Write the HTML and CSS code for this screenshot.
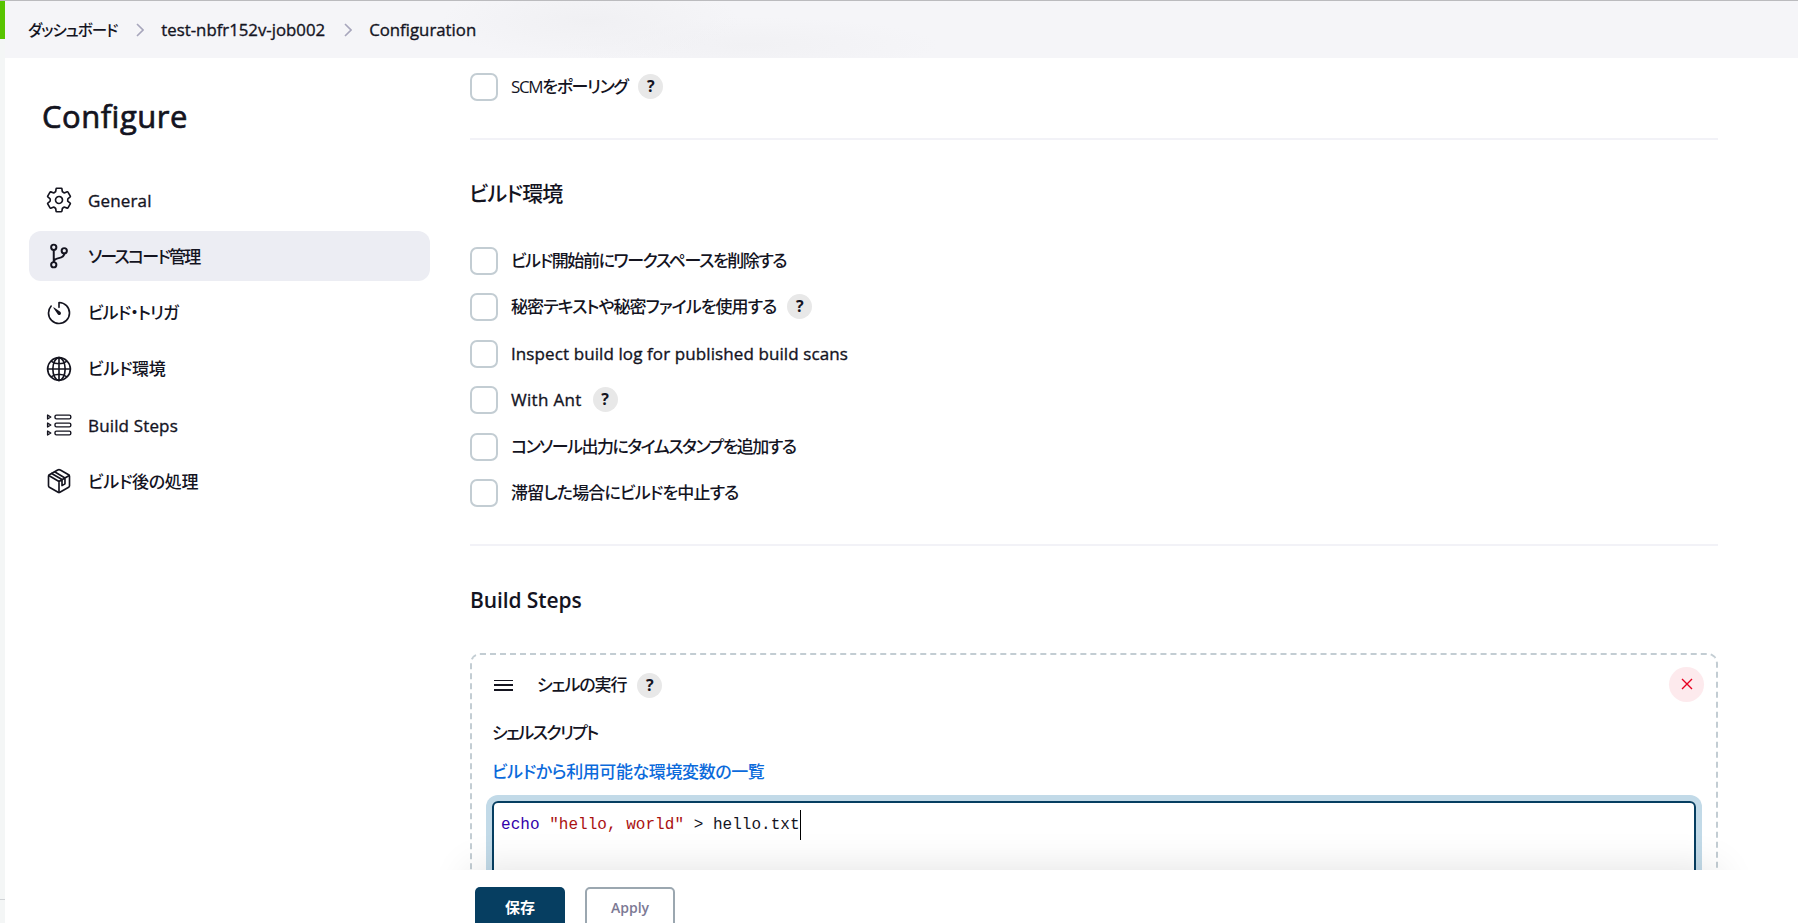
FILE: index.html
```html
<!DOCTYPE html>
<html lang="ja">
<head>
    <meta charset="UTF-8">
    <meta name="viewport" content="width=device-width, initial-scale=1.0">
    <title>test-nbfr152v-job002 Config [Jenkins]</title>
    <link rel="stylesheet" href="styles.css">
</head>
<body>
    <div class="edge">
        <div class="edge-mark"></div>
        <div class="edge-line"></div>
    </div>
    <div class="page">
        <nav class="breadcrumbs">
            <a class="crumb-home">ダッシュボード</a>
            <svg class="chevron" viewBox="0 0 8 14"><path d="M1 1l6 6-6 6"/></svg>
            <a class="crumb latin">test-nbfr152v-job002</a>
            <svg class="chevron" viewBox="0 0 8 14"><path d="M1 1l6 6-6 6"/></svg>
            <a class="crumb latin">Configuration</a>
        </nav>
        <div class="columns">
            <aside class="side-panel">
                <h1>Configure</h1>
                <div class="tasks">
                    <a class="task">
                        <svg viewBox="0 0 512 512"><path d="M262.29 192.31a64 64 0 1057.4 57.4 64.13 64.13 0 00-57.4-57.4zM416.39 256a154.34 154.34 0 01-1.53 20.79l45.21 35.46a10.81 10.81 0 012.45 13.75l-42.77 74a10.81 10.81 0 01-13.14 4.59l-44.9-18.08a16.11 16.11 0 00-15.17 1.75A164.48 164.48 0 01325 400.8a15.94 15.94 0 00-8.82 12.14l-6.73 47.89a11.08 11.08 0 01-10.68 9.17h-85.54a11.11 11.11 0 01-10.69-8.87l-6.72-47.82a16.07 16.07 0 00-9-12.22 155.3 155.3 0 01-21.46-12.57 16 16 0 00-15.11-1.71l-44.89 18.07a10.81 10.81 0 01-13.14-4.58l-42.77-74a10.8 10.8 0 012.45-13.75l38.21-30a16.05 16.05 0 006-14.08c-.36-4.17-.58-8.33-.58-12.5s.21-8.27.58-12.35a16 16 0 00-6.07-13.94l-38.19-30A10.81 10.81 0 0149.48 186l42.77-74a10.81 10.81 0 0113.14-4.59l44.9 18.08a16.11 16.11 0 0015.17-1.75A164.48 164.48 0 01187 111.2a15.94 15.94 0 008.82-12.14l6.73-47.89A11.08 11.08 0 01213.23 42h85.54a11.11 11.11 0 0110.69 8.87l6.72 47.82a16.07 16.07 0 009 12.22 155.3 155.3 0 0121.46 12.57 16 16 0 0015.11 1.71l44.89-18.07a10.81 10.81 0 0113.14 4.58l42.77 74a10.8 10.8 0 01-2.45 13.75l-38.21 30a16.05 16.05 0 00-6.05 14.08c.33 4.14.55 8.3.55 12.47z"/></svg>
                        <span class="latin">General</span>
                    </a>
                    <a class="task active">
                        <svg class="heavy" viewBox="0 0 512 512"><circle cx="160" cy="96" r="48"/><circle cx="160" cy="416" r="48"/><circle cx="352" cy="160" r="48"/><path d="M160 368V144M352 208c0 128-192 48-192 160"/></svg>
                        <span class="t-source">ソースコード管理</span>
                    </a>
                    <a class="task">
                        <svg viewBox="0 0 512 512"><path d="M112.91 128A191.85 191.85 0 0064 254c-1.18 106.35 85.65 193.8 192 194 106.2.2 192-85.83 192-192 0-104.54-83.55-189.61-187.5-192a4.36 4.36 0 00-4.5 4.37V152"/><path class="solid" d="M233.38 278.63l-79-113a8.13 8.13 0 0111.32-11.32l113 79a32.5 32.5 0 01-37.25 53.26 33.21 33.21 0 01-8.07-7.94z"/></svg>
                        <span class="t-trigger">ビルド・トリガ</span>
                    </a>
                    <a class="task">
                        <svg viewBox="0 0 512 512"><path d="M256 48C141.13 48 48 141.13 48 256s93.13 208 208 208 208-93.13 208-208S370.87 48 256 48z"/><path d="M256 48c-58.07 0-112.67 93.13-112.67 208S197.93 464 256 464s112.67-93.13 112.67-208S314.07 48 256 48z"/><path d="M117.33 117.33c38.24 27.15 86.38 43.34 138.67 43.34s100.43-16.19 138.67-43.34M394.67 394.67c-38.24-27.15-86.38-43.34-138.67-43.34s-100.43 16.19-138.67 43.34M256 48v416M464 256H48"/></svg>
                        <span class="t-env">ビルド環境</span>
                    </a>
                    <a class="task">
                        <svg viewBox="0 0 28 28" class="steps"><rect x="10" y="4.1" width="15.8" height="3.8" rx="1.4"/><rect x="10" y="12.1" width="15.8" height="3.8" rx="1.4"/><rect x="10" y="20.1" width="15.8" height="3.8" rx="1.4"/><path d="M2.6 4v4L5.8 6zM2.6 12v4l3.2-2zM2.6 20v4l3.2-2z"/></svg>
                        <span class="latin">Build Steps</span>
                    </a>
                    <a class="task">
                        <svg viewBox="0 0 512 512"><path d="M448 341.37V170.61A32 32 0 00432.11 143l-152-88.46a47.94 47.94 0 00-48.24 0L79.89 143A32 32 0 0064 170.61v170.76A32 32 0 0079.89 369l152 88.46a48 48 0 0048.24 0l152-88.46A32 32 0 00448 341.37z"/><path d="M69 153.99l187 110 187-110M256 463.99v-200M121 118l190 112M175 88l190 112v108l-54 32V230"/></svg>
                        <span class="t-post">ビルド後の処理</span>
                    </a>
                </div>
            </aside>
            <main class="main-panel">
                <div class="check">
                    <span class="box"></span>
                    <span class="t-scm">SCMをポーリング</span>
                    <span class="help">?</span>
                </div>
                <section>
                    <h2 class="h-env">ビルド環境</h2>
                    <div class="check-list">
                        <div class="check"><span class="box"></span><span class="t-clean">ビルド開始前にワークスペースを削除する</span></div>
                        <div class="check"><span class="box"></span><span class="t-secret">秘密テキストや秘密ファイルを使用する</span><span class="help">?</span></div>
                        <div class="check"><span class="box"></span><span class="latin">Inspect build log for published build scans</span></div>
                        <div class="check"><span class="box"></span><span class="t-ant latin">With Ant</span><span class="help">?</span></div>
                        <div class="check"><span class="box"></span><span class="t-time">コンソール出力にタイムスタンプを追加する</span></div>
                        <div class="check"><span class="box"></span><span class="t-abort">滞留した場合にビルドを中止する</span></div>
                    </div>
                </section>
                <section>
                    <h2>Build Steps</h2>
                    <div class="chunk">
                        <div class="chunk-header">
                            <span class="handle"><i></i><i></i><i></i></span>
                            <span class="chunk-title">シェルの実行</span>
                            <span class="help">?</span>
                            <button class="delete">
                                <svg viewBox="0 0 12 12"><path d="M1 1l10 10M11 1L1 11"/></svg>
                            </button>
                        </div>
                        <div class="field-label">シェルスクリプト</div>
                        <a class="env-link">ビルドから利用可能な環境変数の一覧</a>
                        <div class="editor"><span class="builtin">echo</span> <span class="string">"hello, world"</span> &gt; hello.txt<span class="cursor"></span></div>
                    </div>
                </section>
            </main>
        </div>
        <div class="bottom-shadow"></div>
        <div class="bottom-bar">
            <button class="save">保存</button>
            <button class="apply">Apply</button>
        </div>
    </div>
</body>
</html>
```
FILE: styles.css
```css
* {
    box-sizing: border-box;
}
body {
    margin: 0;
    height: 100vh;
    display: flex;
    overflow: hidden;
    background: #fff;
    color: #14141f;
    font-family: "Open Sans", "Noto Sans CJK JP", sans-serif;
    font-size: 17px;
    font-weight: 500;
    font-feature-settings: "palt";
    line-height: 24px;
    border-top: 1px solid #bbbbbe;
}
.latin {
    letter-spacing: 0.1px;
    -webkit-text-stroke: 0.35px currentColor;
}
.edge {
    width: 5px;
    flex: none;
    background: #f4f6f6;
}
.edge-mark {
    height: 38px;
    background: #58c400;
}
.edge-line {
    height: 1px;
    margin-top: 860px;
    background: #d0d3d6;
}
.page {
    flex: 1;
    position: relative;
    overflow: hidden;
}
.breadcrumbs {
    height: 57px;
    display: flex;
    align-items: center;
    padding: 0 23px;
    background: radial-gradient(ellipse 150px 40px at 585px 20px, #f0f0f3, transparent),
        radial-gradient(ellipse 190px 28px at 745px 44px, #f1f1f4, transparent), #f5f5f8;
}
.crumb-home {
    font-size: 15.5px;
    letter-spacing: -1px;
}
.crumb {
    letter-spacing: -0.1px;
}
.breadcrumbs .crumb {
    letter-spacing: 0;
    font-size: 16.8px;
}
.chevron {
    width: 8px;
    height: 14px;
    margin: 0 17.5px 0 18.5px;
    fill: none;
    stroke: #a7a6bc;
    stroke-width: 1.6;
}
.columns {
    display: flex;
}
.side-panel {
    width: 425px;
    flex: none;
    padding: 36px 0 0 24px;
}
h1 {
    margin: 0 0 0 13px;
    font-size: 31px;
    font-weight: 500;
    line-height: 44px;
    letter-spacing: 0.5px;
    -webkit-text-stroke: 0.7px currentColor;
}
.tasks {
    display: flex;
    flex-direction: column;
    gap: 6.3px;
    margin-top: 37px;
}
.task {
    height: 50px;
    display: flex;
    align-items: center;
    gap: 15px;
    padding: 0 16px;
    border-radius: 12px;
}
.task.active {
    background: #ecedf3;
}
.task span {
    padding-top: 1px;
}
.task .latin {
    letter-spacing: 0.15px;
}
.task svg {
    width: 28px;
    height: 28px;
    fill: none;
    stroke: currentColor;
    stroke-width: 30;
    stroke-linecap: round;
    stroke-linejoin: round;
}
.task .heavy {
    stroke-width: 36;
}
.task .solid {
    fill: currentColor;
    stroke: none;
}
.task .steps {
    stroke-width: 1.4;
}
.t-source {
    letter-spacing: -1.75px;
}
.t-trigger {
    letter-spacing: -0.9px;
}
.t-env,
.t-post {
    letter-spacing: -0.3px;
}
.main-panel {
    width: 1248px;
    margin-left: 40px;
    padding-top: 15px;
}
.check {
    height: 28px;
    display: flex;
    align-items: center;
}
.box {
    width: 28px;
    height: 28px;
    margin-right: 13px;
    border: 2px solid #c3cdd3;
    border-radius: 7px;
}
.help {
    width: 25px;
    height: 25px;
    margin: -1px 0 0 11px;
    border-radius: 50%;
    background: #e8e8e8;
    font-size: 16px;
    font-weight: 700;
    line-height: 25px;
    text-align: center;
}
.t-scm {
    letter-spacing: -1.35px;
}
.t-clean {
    letter-spacing: -1.4px;
}
.t-secret {
    letter-spacing: -0.95px;
}
.check .t-ant {
    letter-spacing: 0.3px;
}
.t-time {
    letter-spacing: -1.5px;
}
.t-abort {
    letter-spacing: -0.85px;
}
section {
    margin-top: 37px;
    border-top: 2px solid #f2f2f7;
}
h2 {
    margin: 40px 0 0;
    font-size: 21px;
    font-weight: 600;
    line-height: 28px;
    letter-spacing: -0.1px;
}
.h-env {
    margin: 39px 0 40px -1px;
    font-weight: 500;
    letter-spacing: -0.8px;
}
.check-list {
    display: flex;
    flex-direction: column;
    gap: 18.45px;
}
.chunk {
    height: 400px;
    margin-top: 39px;
    padding: 12px 20px;
    border: 2px dashed #c3cdd3;
    border-radius: 10px;
}
.chunk-header {
    height: 35px;
    display: flex;
    align-items: center;
}
.chunk-title {
    letter-spacing: -1.1px;
}
.chunk-header .help {
    margin-top: 1px;
}
.handle {
    width: 19px;
    margin: 1px 24px 0 2px;
    display: flex;
    flex-direction: column;
    gap: 3px;
}
.handle i {
    height: 1.6px;
    background: #14141f;
}
.delete {
    width: 35px;
    height: 35px;
    margin: -1px -8px 0 auto;
    padding: 0;
    border: none;
    border-radius: 50%;
    background: #fdeaed;
}
.delete svg {
    width: 12px;
    height: 12px;
    display: block;
    margin: auto;
    fill: none;
    stroke: #e6001f;
    stroke-width: 1.4;
}
.field-label {
    margin-top: 19px;
    letter-spacing: -1.65px;
}
.env-link {
    display: block;
    margin-top: 15px;
    color: #0b6adb;
    letter-spacing: -0.4px;
}
.editor {
    height: 200px;
    margin-top: 17px;
    padding: 7px;
    border: 2px solid #063e61;
    border-radius: 6px;
    box-shadow: 0 0 0 6px #c2dae8;
    font-family: "Liberation Mono", monospace;
    font-size: 16px;
    font-weight: 400;
    letter-spacing: 0.03px;
    line-height: 30px;
    white-space: pre;
}
.builtin {
    color: #3300aa;
}
.string {
    color: #aa1111;
}
.cursor {
    display: inline-block;
    width: 1px;
    height: 30px;
    vertical-align: top;
    background: #000;
}
.bottom-shadow {
    position: absolute;
    left: 465px;
    bottom: 0;
    width: 1248px;
    height: 53px;
    box-shadow: 0 0 40px rgba(0, 0, 0, 0.12);
}
.bottom-bar {
    position: absolute;
    left: 0;
    right: 0;
    bottom: 0;
    height: 53px;
    display: flex;
    gap: 20px;
    padding: 17px 0 0 470px;
    background: #fff;
}
.bottom-bar button {
    width: 90px;
    height: 42px;
    flex: none;
    border-radius: 5px;
    font: inherit;
    font-size: 14px;
    font-weight: 600;
}
.bottom-bar .save {
    padding-bottom: 3px;
    border: none;
    background: #063e61;
    color: #fff;
    font-size: 15px;
}
.bottom-bar .apply {
    border: 2px solid #9ba7b0;
    background: #fff;
    color: #7c7994;
}
```
